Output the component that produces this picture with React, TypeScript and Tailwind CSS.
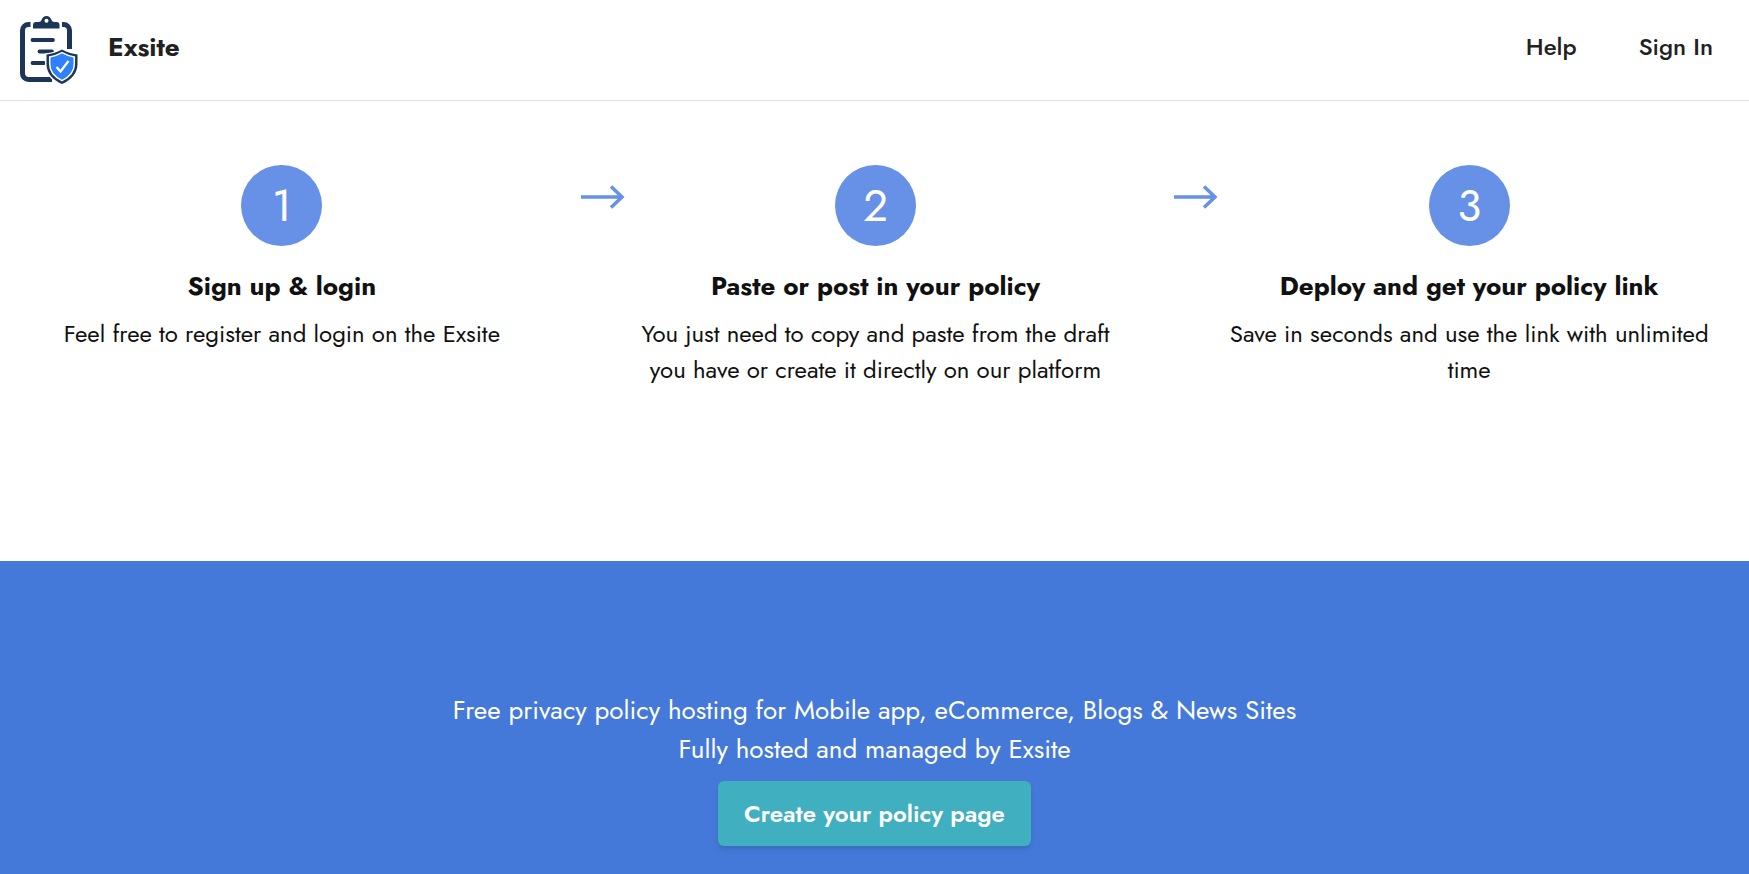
import { Fragment } from 'react';

const steps = [
  { title: 'Sign up & login', text: 'Feel free to register and login on the Exsite' },
  { title: 'Paste or post in your policy', text: 'You just need to copy and paste from the draft you have or create it directly on our platform' },
  { title: 'Deploy and get your policy link', text: 'Save in seconds and use the link with unlimited time' },
];

function Logo() {
  return (
    <svg viewBox="0 0 58 68" className="w-[58px] h-[68px]" fill="none" aria-hidden="true">
      <path d="M10.500 8.500H8.500A6 6 0 0 0 2.500 14.500V57.500A6 6 0 0 0 8.500 63.500H32" stroke="#1d3557" strokeWidth="5" />
      <path d="M42 8.500H43.500A6 6 0 0 1 49.500 14.500V33" stroke="#1d3557" strokeWidth="5" />
      <path fillRule="evenodd" d="M13 12.500V9Q13 6 16 6H18.500Q21 6 21.500 4Q23 0 26.500 0T31.500 4Q32 6 34.500 6H36.500Q39.500 6 39.500 9V12.500ZM26.500 2.800A2 2 0 1 0 26.500 6.800A2 2 0 1 0 26.500 2.800Z" fill="#1d3557" />
      <path d="M12.500 24H33M19.500 35.500H32M12.500 47H24" stroke="#1d3557" strokeWidth="3.800" strokeLinecap="round" />
      <path d="M42 32Q49 36.500 59 37.500V48C59 58 52 65.500 42 69C32 65.500 25 58 25 48V37.500Q35 36.500 42 32Z" fill="#fff" />
      <path d="M42 33.500Q49 37.500 57.500 38.500V48C57.500 57.500 51 64 42 68C33 64 26.500 57.500 26.500 48V38.500Q35 37.500 42 33.500Z" fill="#1d3557" />
      <path d="M42 36.700Q48 40 54.300 41V48C54.300 56 49.500 61 42 64.600C34.500 61 29.700 56 29.700 48V41Q36 40 42 36.700Z" fill="#2f80ff" stroke="#fff" strokeWidth="1.500" />
      <path d="M36.500 51L40.500 55.500L48.500 45" stroke="#fff" strokeWidth="2.200" />
    </svg>
  );
}

function Arrow() {
  return (
    <svg viewBox="0 0 44 24" className="w-11 h-6" fill="none" stroke="#6691e7" strokeWidth="3.500" aria-hidden="true">
      <path d="M0 12H41M30 1.500L41 12L30 22.500" />
    </svg>
  );
}

function App() {
  return (
    <div className="min-h-screen flex flex-col bg-white font-['Jost','Lato',sans-serif]">
      <header className="flex items-center justify-between h-[101px] border-b border-[#e0e0e0] pl-5 pr-9 text-[#212121]">
        <a href="#" className="flex items-center gap-[30px] text-[26px] font-bold">
          <Logo />
          <span className="pb-1.5">Exsite</span>
        </a>
        <nav className="flex gap-[62px] pb-1.5 text-2xl font-medium">
          <a href="#">Help</a>
          <a href="#">Sign In</a>
        </nav>
      </header>

      <section className="flex pl-[35px] pr-[33px] pt-16 pb-[173px]">
        {steps.map((step, i) => (
          <Fragment key={step.title}>
            {i > 0 && (
              <div className="w-[100px] shrink-0 flex justify-end pt-5 pr-1">
                <Arrow />
              </div>
            )}
            <div className="flex-1 flex flex-col items-center text-center text-[#111]">
              <div className="size-[81px] rounded-full bg-[#6691e7] text-white text-[44px] flex items-center justify-center">
                {i + 1}
              </div>
              <h3 className="mt-5 text-[26px] leading-10 font-bold">{step.title}</h3>
              <p className="mt-2.5 text-2xl leading-9">{step.text}</p>
            </div>
          </Fragment>
        ))}
      </section>

      <section className="flex-1 flex flex-col items-center bg-[#4479d9] pt-[130px] pb-7 text-white">
        <p className="text-center text-[26px] leading-[39px]">
          Free privacy policy hosting for Mobile app, eCommerce, Blogs &amp; News Sites
          <br />
          Fully hosted and managed by Exsite
        </p>
        <button className="mt-3 h-[65px] px-[26px] rounded-md bg-[#40afbf] text-2xl font-semibold shadow-md">
          Create your policy page
        </button>
      </section>
    </div>
  );
}

export default App
